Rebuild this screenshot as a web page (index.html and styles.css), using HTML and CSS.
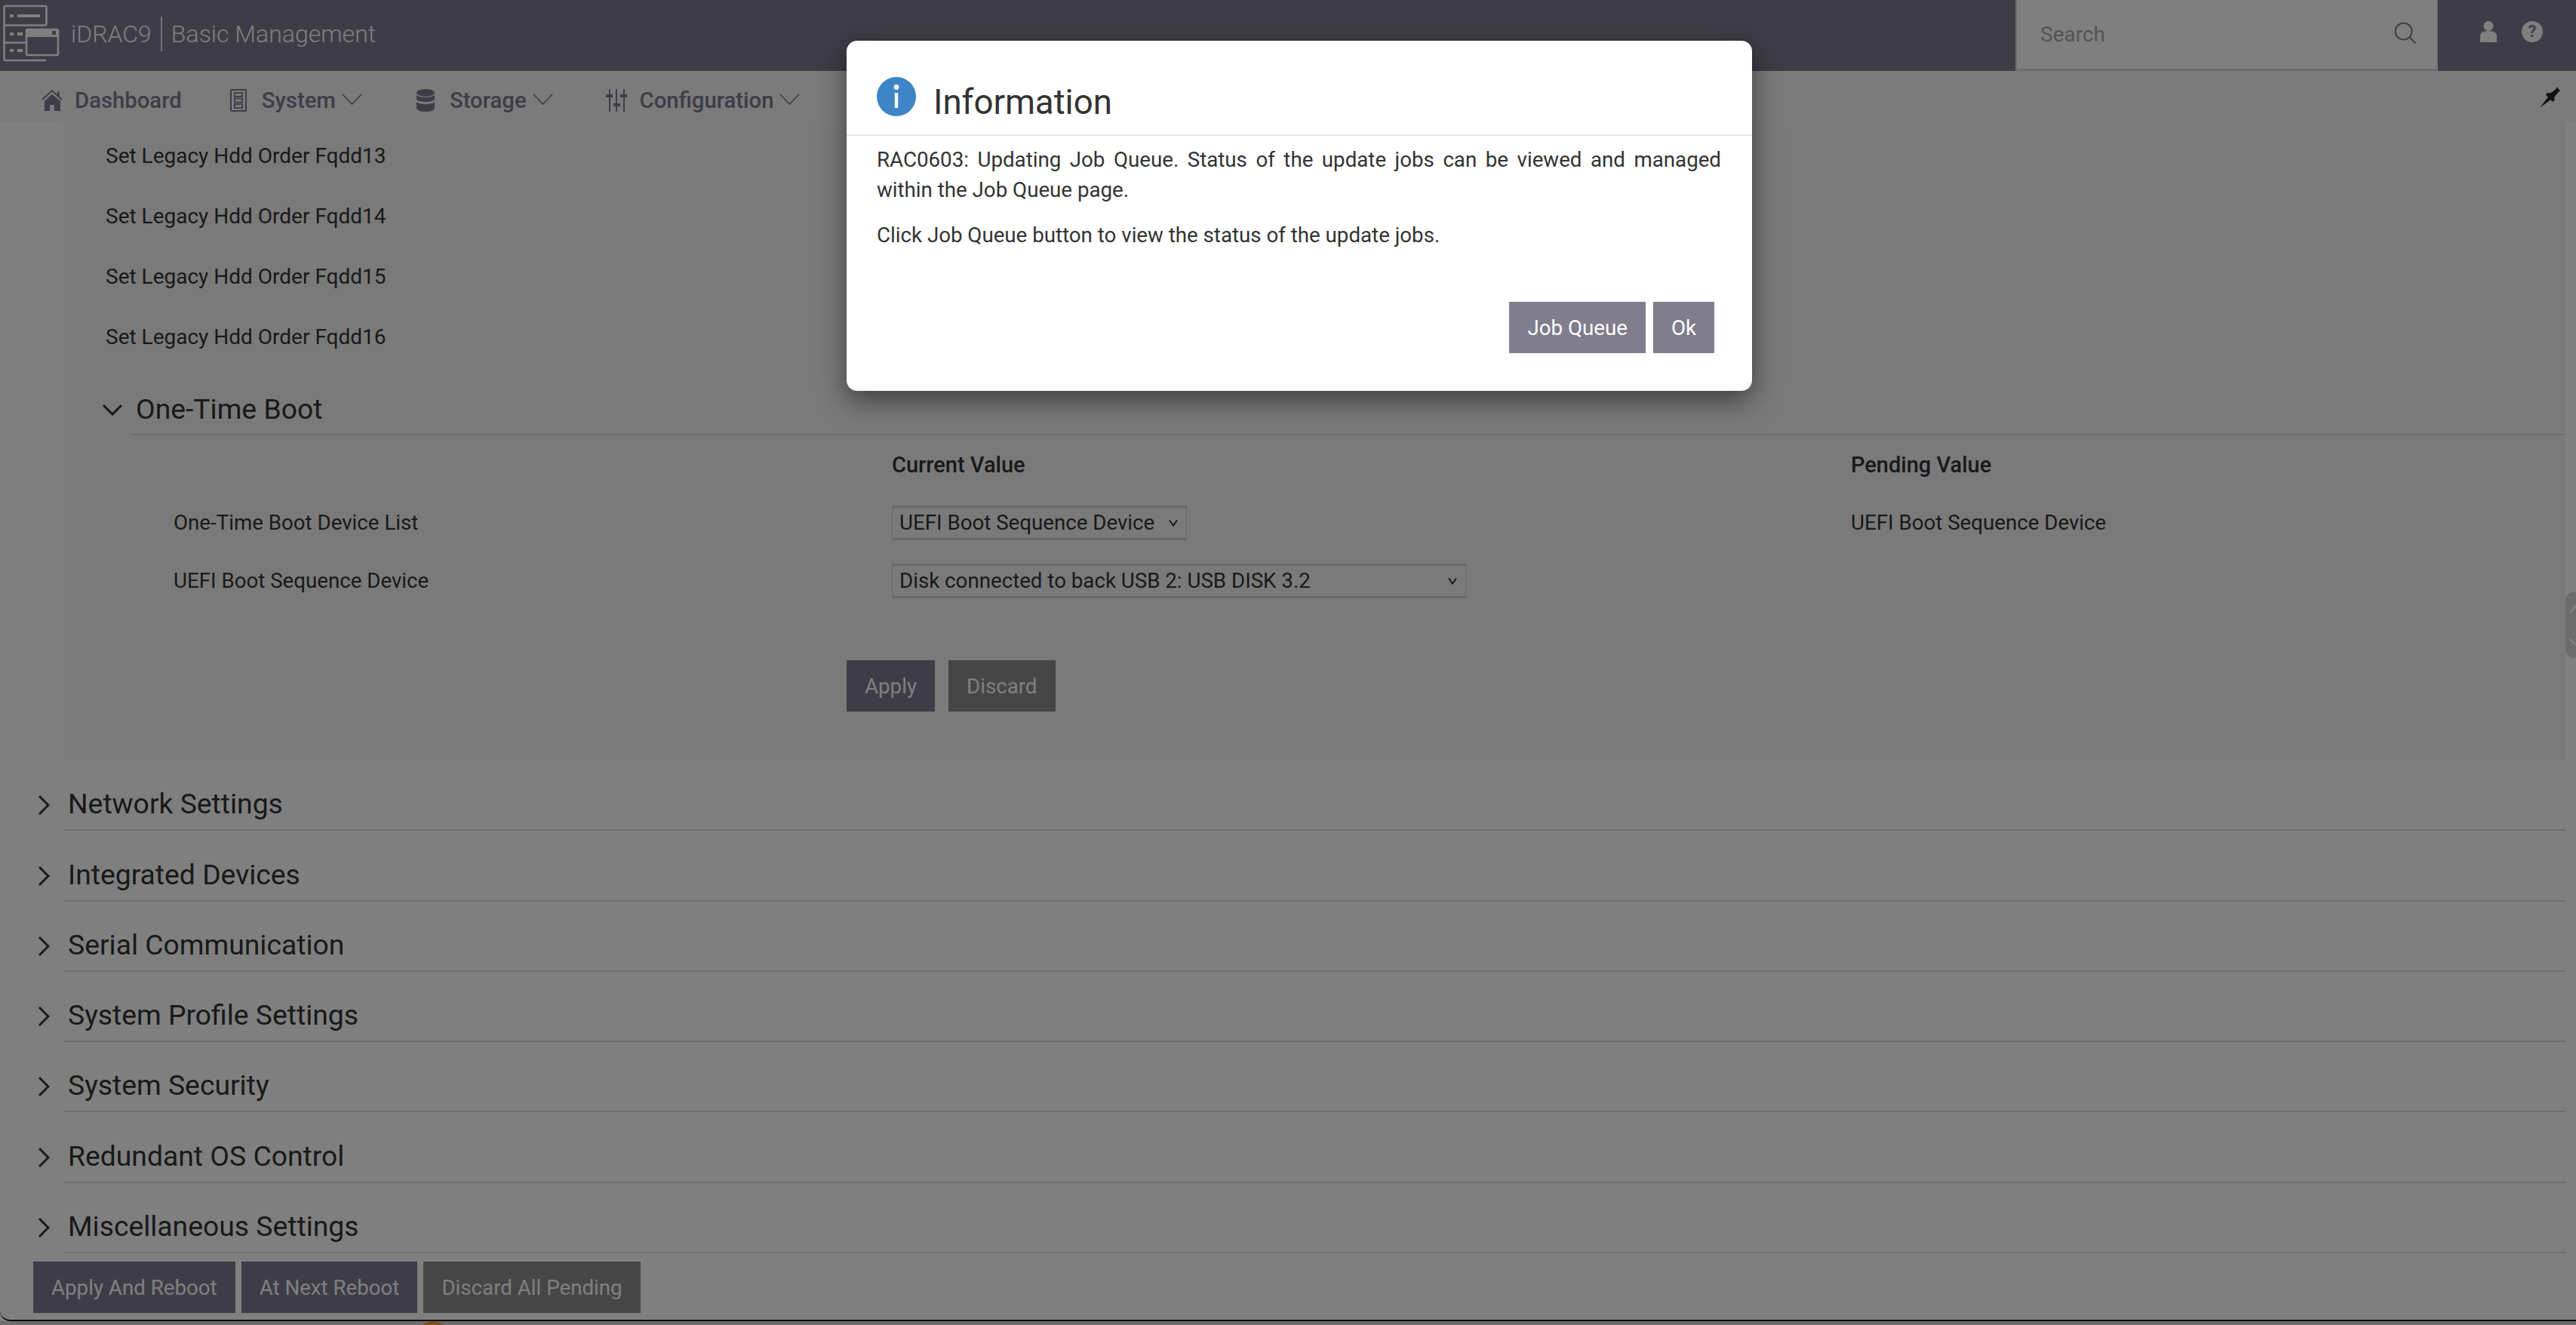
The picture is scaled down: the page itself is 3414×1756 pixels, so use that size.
FILE: index.html
```html
<!DOCTYPE html>
<html lang="en">
<head>
<meta charset="utf-8">
<title>iDRAC9 Basic Management</title>
<link rel="stylesheet" href="styles.css">
</head>
<body>
<div class="window">
  <header class="topbar">
    <svg class="logo" width="80" height="86" viewBox="0 0 80 86">
      <g fill="none" stroke="#fff" stroke-width="2.6">
        <rect x="5.5" y="8" width="56" height="25.5" rx="2"/>
        <path d="M5.5 33.5V78a2 2 0 0 0 2 2H61"/>
        <path d="M5.5 56.5H34"/>
        <rect x="35" y="39" width="42" height="34" rx="2"/>
      </g>
      <g fill="#fff">
        <rect x="13" y="19" width="5" height="4"/><rect x="23" y="19" width="30" height="4"/>
        <rect x="13" y="43" width="5" height="4"/><rect x="23" y="43" width="7" height="4"/>
        <rect x="13" y="65" width="5" height="4"/><rect x="23" y="65" width="7" height="4"/>
        <rect x="35" y="39" width="42" height="10"/>
      </g>
      <rect x="69" y="41" width="5" height="5" fill="#7c7a8e"/>
    </svg>
    <div class="brand"><span>iDRAC9</span><i class="brand-sep"></i><span>Basic Management</span></div>
    <div class="search">
      <span class="search-text">Search</span>
      <svg class="search-icon" width="30" height="30" viewBox="0 0 30 30"><circle cx="12.500" cy="12.500" r="11" fill="none" stroke="#7c7a8e" stroke-width="2"/><path d="M20.500 20.500L28.500 28.500" stroke="#7c7a8e" stroke-width="2.200"/></svg>
    </div>
    <div class="top-icons">
      <svg width="22" height="28" viewBox="0 0 22 28"><circle cx="11" cy="6.500" r="6.500" fill="#fff"/><path d="M0 28V20C0 15 4 13 11 13S22 15 22 20V28Z" fill="#fff"/></svg>
      <span class="help">?</span>
    </div>
  </header>

  <nav class="navbar">
    <a class="nav-item nav-first">
      <svg width="28" height="30" viewBox="0 0 28 30"><path d="M1 14L14 2L27 14" fill="none" stroke="#7c7a8e" stroke-width="2"/><path d="M21 3h2.500v6H21z" fill="#7c7a8e"/><path d="M14 7L25 16V29H17V21H11V29H4V16Z" fill="#7c7a8e"/></svg>
      <span class="nav-label nav-label-first">Dashboard</span>
    </a>
    <a class="nav-item nav-system">
      <svg width="22" height="30" viewBox="0 0 22 30"><rect x="1" y="1" width="20" height="28" rx="1" fill="none" stroke="#7c7a8e" stroke-width="2"/><g fill="none" stroke="#7c7a8e" stroke-width="1.800"><rect x="6" y="5" width="10" height="5"/><rect x="6" y="12.500" width="10" height="5"/><rect x="6" y="20" width="10" height="5"/></g></svg>
      <span class="nav-label">System</span>
      <svg class="caret" width="27" height="15" viewBox="0 0 27 15"><path d="M1 1L13.500 14L26 1" fill="none" stroke="#7c7a8e" stroke-width="1.600"/></svg>
    </a>
    <a class="nav-item nav-storage">
      <svg width="24" height="30" viewBox="0 0 24 30"><ellipse cx="12" cy="5" rx="12" ry="5" fill="#7c7a8e"/><path d="M0 8C3 12 21 12 24 8V14C21 18 3 18 0 14Z" fill="#7c7a8e"/><path d="M0 17C3 21 21 21 24 17V25C24 28 19 30 12 30S0 28 0 25Z" fill="#7c7a8e"/></svg>
      <span class="nav-label">Storage</span>
      <svg class="caret" width="27" height="15" viewBox="0 0 27 15"><path d="M1 1L13.500 14L26 1" fill="none" stroke="#7c7a8e" stroke-width="1.600"/></svg>
    </a>
    <a class="nav-item nav-config">
      <svg width="28" height="30" viewBox="0 0 28 30"><g fill="#7c7a8e"><rect x="4" y="0" width="2" height="30"/><rect x="13" y="0" width="2" height="30"/><rect x="23" y="0" width="2" height="30"/><rect x="0" y="7" width="9" height="4"/><rect x="10" y="19" width="9" height="4"/><rect x="19" y="7" width="9" height="4"/></g></svg>
      <span class="nav-label nav-label-config">Configuration</span>
      <svg class="caret" width="27" height="15" viewBox="0 0 27 15"><path d="M1 1L13.500 14L26 1" fill="none" stroke="#7c7a8e" stroke-width="1.600"/></svg>
    </a>
    <svg class="pin" width="28" height="28" viewBox="0 0 28 28"><path d="M27.500 6L22.500 0L21.500 3L14 8.500L10 8L8 10.500L17 20L19.500 18L19.500 13.500L25.500 6Z" fill="#222"/><path d="M0 28L11 13.500L14.500 17Z" fill="#222"/></svg>
  </nav>

  <main class="content">
    <section class="panel">
      <div class="plain-row">Set Legacy Hdd Order Fqdd13</div>
      <div class="plain-row">Set Legacy Hdd Order Fqdd14</div>
      <div class="plain-row">Set Legacy Hdd Order Fqdd15</div>
      <div class="plain-row">Set Legacy Hdd Order Fqdd16</div>

      <div class="sub-head">
        <svg class="chev-down" width="28" height="16" viewBox="0 0 28 16"><path d="M2 2L14 14L26 2" fill="none" stroke="#333" stroke-width="3"/></svg>
        <h3 class="sub-title">One-Time Boot</h3>
      </div>

      <div class="attr-grid">
        <span></span><strong class="col-head">Current Value</strong><strong class="col-head">Pending Value</strong>
        <span class="attr-label">One-Time Boot Device List</span>
        <span><select class="sel"><option>UEFI Boot Sequence Device</option></select></span>
        <span class="attr-value">UEFI Boot Sequence Device</span>
        <span class="attr-label">UEFI Boot Sequence Device</span>
        <span><select class="sel sel-wide"><option>Disk connected to back USB 2: USB DISK 3.2</option></select></span>
        <span></span>
      </div>

      <div class="panel-actions">
        <button class="btn btn-primary">Apply</button>
        <button class="btn btn-grey">Discard</button>
      </div>
    </section>

    <div class="acc"><svg class="chev" width="16" height="28" viewBox="0 0 16 28"><path d="M2 2L14 14L2 26" fill="none" stroke="#333" stroke-width="3"/></svg><h3 class="acc-title">Network Settings</h3></div>
    <div class="acc"><svg class="chev" width="16" height="28" viewBox="0 0 16 28"><path d="M2 2L14 14L2 26" fill="none" stroke="#333" stroke-width="3"/></svg><h3 class="acc-title">Integrated Devices</h3></div>
    <div class="acc"><svg class="chev" width="16" height="28" viewBox="0 0 16 28"><path d="M2 2L14 14L2 26" fill="none" stroke="#333" stroke-width="3"/></svg><h3 class="acc-title">Serial Communication</h3></div>
    <div class="acc"><svg class="chev" width="16" height="28" viewBox="0 0 16 28"><path d="M2 2L14 14L2 26" fill="none" stroke="#333" stroke-width="3"/></svg><h3 class="acc-title">System Profile Settings</h3></div>
    <div class="acc"><svg class="chev" width="16" height="28" viewBox="0 0 16 28"><path d="M2 2L14 14L2 26" fill="none" stroke="#333" stroke-width="3"/></svg><h3 class="acc-title">System Security</h3></div>
    <div class="acc"><svg class="chev" width="16" height="28" viewBox="0 0 16 28"><path d="M2 2L14 14L2 26" fill="none" stroke="#333" stroke-width="3"/></svg><h3 class="acc-title">Redundant OS Control</h3></div>
    <div class="acc"><svg class="chev" width="16" height="28" viewBox="0 0 16 28"><path d="M2 2L14 14L2 26" fill="none" stroke="#333" stroke-width="3"/></svg><h3 class="acc-title">Miscellaneous Settings</h3></div>
  </main>

  <footer class="footer">
    <button class="btn btn-primary btn-foot">Apply And Reboot</button>
    <button class="btn btn-primary btn-foot">At Next Reboot</button>
    <button class="btn btn-grey btn-foot">Discard All Pending</button>
  </footer>

  <div class="handle">
    <svg width="14" height="88" viewBox="0 0 14 88"><path d="M6 28L14 19M6 63L14 71" fill="none" stroke="#fff" stroke-width="3"/></svg>
  </div>
</div>
<div class="under"><span class="dot"></span></div>

<div class="overlay"></div>

<div class="modal">
  <div class="modal-head">
    <svg width="52" height="52" viewBox="0 0 52 52"><circle cx="26" cy="26" r="26" fill="#3d85c6"/><circle cx="26" cy="13.500" r="3.400" fill="#fff"/><rect x="23.800" y="21" width="4.400" height="20" fill="#fff"/></svg>
    <h2 class="modal-title">Information</h2>
  </div>
  <div class="modal-body">
    <p class="msg">RAC0603: Updating Job Queue. Status of the update jobs can be viewed and managed within the Job Queue page.</p>
    <p class="msg">Click Job Queue button to view the status of the update jobs.</p>
  </div>
  <div class="modal-foot">
    <button class="btn btn-modal">Job Queue</button>
    <button class="btn btn-modal">Ok</button>
  </div>
</div>
</body>
</html>
```

FILE: styles.css
```css
* { box-sizing: border-box; }
html, body { margin: 0; height: 1756px; overflow: hidden; background: #fff; }
body { font-family: Roboto, "Liberation Sans", sans-serif; font-size: 28px; color: #333; position: relative; }

.window {
  height: 1751px;
  display: flex;
  flex-direction: column;
  position: relative;
  overflow: hidden;
  background: #fff;
  border-bottom: 2px solid #111;
  border-bottom-left-radius: 14px;
}

/* top bar */
.topbar { height: 94px; flex: none; background: #7c7a8e; display: flex; align-items: flex-start; color: #fff; }
.logo { flex: none; margin-right: 14px; }
.brand { display: flex; align-items: center; height: 90px; font-weight: 300; font-size: 32px; }
.brand-sep { width: 2px; height: 46px; background: #fff; opacity: .8; margin: 0 12px; }
.search {
  margin-left: auto;
  width: 560px;
  height: 94px;
  background: #fff;
  border: solid #dcdcdc;
  border-width: 0 2px 3px;
  display: flex;
  align-items: center;
  justify-content: space-between;
  padding: 0 26px 0 31px;
}
.search-text { color: #a9a9a9; font-size: 28px; }
.search-icon { margin-bottom: 4px; }
.top-icons { width: 183px; height: 94px; display: flex; align-items: center; padding: 0 0 10px 56px; gap: 33px; }
.help {
  width: 28px; height: 28px; border-radius: 50%;
  background: #fff; color: #7c7a8e;
  font-size: 22px; font-weight: 700; line-height: 28px; text-align: center;
}

/* nav */
.navbar { height: 68px; flex: none; background: #f6f6f6; display: flex; align-items: center; padding: 10px 0 0 55px; position: relative; }
.nav-item { display: flex; align-items: center; color: #7c7a8e; font-size: 29.3px; font-weight: 500; }
.nav-label { margin-left: 20px; }
.nav-label-first { margin-left: 16px; }
.nav-label-config { margin-left: 17px; }
.nav-system { margin-left: 64px; }
.nav-storage { margin-left: 72px; }
.nav-config { margin-left: 70px; }
.caret { margin-left: 8px; margin-bottom: 4px; }
.pin { margin-left: auto; margin-right: 20px; margin-bottom: 9px; }

/* content */
.content { flex: 1; min-height: 0; display: flex; flex-direction: column; }
.panel { height: 846px; flex: none; margin: 0 14px 0 84px; background: #f5f5f5; padding-top: 5px; }
.plain-row { height: 80px; line-height: 80px; padding-left: 56px; color: #333; }
.sub-head { height: 90px; margin-left: 89px; border-bottom: 2px solid #ddd; display: flex; align-items: center; position: relative; padding: 22px 0 0 7px; }
.chev-down { position: absolute; left: -38px; top: 48px; }
.sub-title { margin: 0; font-size: 37.3px; font-weight: 400; color: #333; }
.attr-grid {
  display: grid;
  grid-template-columns: 1098px 1271px 1fr;
  grid-auto-rows: 77px;
  font-size: 27.7px;
}
.attr-grid > * { display: flex; align-items: center; }
.col-head { font-weight: 500; font-size: 29px; }
.attr-label { padding-left: 146px; }
.sel {
  appearance: none;
  font-family: Roboto, "Liberation Sans", sans-serif;
  font-size: 27.7px;
  color: #333;
  height: 46px;
  background: #f5f5f5 url("data:image/svg+xml,%3Csvg xmlns='http://www.w3.org/2000/svg' width='12' height='10'%3E%3Cpath d='M1 1.500L6 8.500L11 1.500' fill='none' stroke='%23222' stroke-width='1.800'/%3E%3C/svg%3E") no-repeat right 11px center;
  border: solid #d2d2d2;
  border-width: 3px 1px;
  border-radius: 0;
  width: 391px;
  padding: 0 0 0 9px;
}
.sel-wide { width: 761px; }
.panel-actions { margin-top: 67px; padding-left: 1038px; display: flex; gap: 18px; }

.btn { border: 0; font-family: Roboto, "Liberation Sans", sans-serif; font-size: 27.7px; color: #fff; height: 68px; padding: 0 24px; }
.btn-primary { background: #7c7a8e; }
.btn-grey { background: #8c8c8c; }

.acc { height: 93.3px; flex: none; display: flex; position: relative; margin: 0 14px 0 84px; border-bottom: 2px solid #ddd; align-items: flex-end; padding: 0 0 13px 6px; }
.chev { position: absolute; left: -34px; bottom: 18px; }
.acc-title { margin: 0; font-size: 37.3px; font-weight: 400; color: #333; line-height: 42px; }

.footer { flex: none; height: 77px; padding: 0 0 9px 44px; display: flex; align-items: flex-start; gap: 8px; }

.handle {
  position: absolute; right: 0; top: 784px;
  width: 14px; height: 88px;
  background: #d8d8d8;
  border-radius: 12px 0 0 12px;
}
.handle svg { display: block; }

.under { height: 5px; background: #dcdcdc; position: relative; overflow: hidden; }
.dot { position: absolute; left: 552px; top: 0; width: 44px; height: 44px; border-radius: 50%; background: #f0a030; }

/* dim layer and dialog */
.overlay { position: absolute; inset: 0; background: rgba(0,0,0,.5); }
.modal {
  position: absolute; left: 1122px; top: 54px;
  width: 1200px; height: 464px;
  background: #fff;
  border-radius: 14px;
  box-shadow: 0 12px 36px rgba(0,0,0,.5);
  display: flex; flex-direction: column;
}
.modal-head { height: 126px; flex: none; border-bottom: 2px solid #e5e5e5; display: flex; align-items: flex-start; padding: 48px 0 0 40px; }
.modal-title { margin: 7px 0 0 23px; font-size: 45.6px; line-height: 54px; font-weight: 400; color: #333; }
.modal-body { padding: 12px 41px 0 40px; }
.msg { margin: 0 0 20px; font-size: 27.7px; line-height: 40px; text-align: justify; color: #333; }
.modal-foot { margin-top: auto; padding: 0 50px 50px 0; display: flex; justify-content: flex-end; gap: 10px; }
.btn-modal { background: #807d8d; }
```
